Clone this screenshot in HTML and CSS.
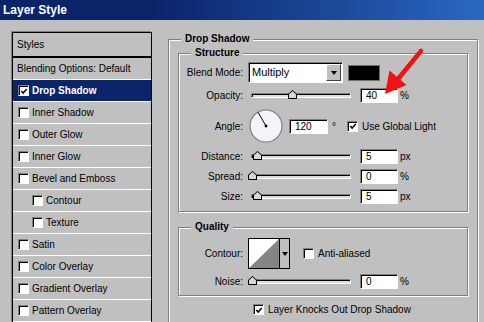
FILE: index.html
```html
<!DOCTYPE html>
<html lang="en">
<head>
    <meta charset="UTF-8">
    <meta name="viewport" content="width=device-width, initial-scale=1.0">
    <title>Layer Style</title>
    <link rel="stylesheet" href="styles.css">
</head>
<body>
    <div class="window">
        <div class="titlebar">Layer Style</div>
        <div class="main">
            <ul class="style-list">
                <li class="head">Styles</li>
                <li class="plain">Blending Options: Default</li>
                <li class="selected"><span class="check"><svg width="9" height="9" viewBox="0 0 9 9"><path d="M1.5 4 L3.5 6.3 L7.6 1.8" fill="none" stroke="#000" stroke-width="1.7"/></svg></span>Drop Shadow</li>
                <li><span class="check"></span>Inner Shadow</li>
                <li><span class="check"></span>Outer Glow</li>
                <li><span class="check"></span>Inner Glow</li>
                <li><span class="check"></span>Bevel and Emboss</li>
                <li class="sub"><span class="check"></span>Contour</li>
                <li class="sub"><span class="check"></span>Texture</li>
                <li><span class="check"></span>Satin</li>
                <li><span class="check"></span>Color Overlay</li>
                <li><span class="check"></span>Gradient Overlay</li>
                <li><span class="check"></span>Pattern Overlay</li>
            </ul>

            <div class="panel">
                <fieldset class="group outer">
                    <legend>Drop Shadow</legend>

                    <fieldset class="group inner">
                        <legend>Structure</legend>
                        <div class="row first">
                            <span class="lbl">Blend Mode:</span>
                            <div class="select">
                                <span class="select-value">Multiply</span>
                                <span class="select-btn"><span class="arrow"></span></span>
                            </div>
                            <span class="swatch"></span>
                        </div>
                        <div class="row">
                            <span class="lbl">Opacity:</span>
                            <div class="slider"><span class="thumb" style="left: 36px"></span></div>
                            <span class="num">40</span>
                            <span class="unit">%</span>
                        </div>
                        <div class="row">
                            <span class="lbl">Angle:</span>
                            <svg class="dial" width="36" height="36" viewBox="0 0 36 36">
                                <circle cx="18" cy="18" r="16.6" fill="#7a7a86"/>
                                <circle cx="18" cy="18" r="15.4" fill="#f4f4fa"/>
                                <path d="M18 18 L10 4.2" stroke="#000" stroke-width="1"/>
                                <circle cx="18" cy="18" r="1.4" fill="#000"/>
                            </svg>
                            <span class="num angle">120</span>
                            <span class="unit deg">°</span>
                            <span class="check"><svg width="9" height="9" viewBox="0 0 9 9"><path d="M1.5 4 L3.5 6.3 L7.6 1.8" fill="none" stroke="#000" stroke-width="1.7"/></svg></span>
                            <span class="check-label">Use Global Light</span>
                        </div>
                        <div class="row">
                            <span class="lbl">Distance:</span>
                            <div class="slider"><span class="thumb" style="left: 1px"></span></div>
                            <span class="num">5</span>
                            <span class="unit">px</span>
                        </div>
                        <div class="row">
                            <span class="lbl">Spread:</span>
                            <div class="slider"><span class="thumb" style="left: -4px"></span></div>
                            <span class="num">0</span>
                            <span class="unit">%</span>
                        </div>
                        <div class="row">
                            <span class="lbl">Size:</span>
                            <div class="slider"><span class="thumb" style="left: 1px"></span></div>
                            <span class="num">5</span>
                            <span class="unit">px</span>
                        </div>
                    </fieldset>

                    <fieldset class="group inner quality">
                        <legend>Quality</legend>
                        <div class="row first">
                            <span class="lbl">Contour:</span>
                            <div class="contour">
                                <svg width="30" height="29" viewBox="0 0 30 29">
                                    <rect width="30" height="29" fill="#fff"/>
                                    <polygon points="0,29 30,0 30,29" fill="#858585"/>
                                </svg>
                                <span class="contour-btn"><span class="arrow"></span></span>
                            </div>
                            <span class="check aa"></span>
                            <span class="check-label">Anti-aliased</span>
                        </div>
                        <div class="row">
                            <span class="lbl">Noise:</span>
                            <div class="slider"><span class="thumb" style="left: -4px"></span></div>
                            <span class="num">0</span>
                            <span class="unit">%</span>
                        </div>
                    </fieldset>

                    <div class="knockout">
                        <span class="check"><svg width="9" height="9" viewBox="0 0 9 9"><path d="M1.5 4 L3.5 6.3 L7.6 1.8" fill="none" stroke="#000" stroke-width="1.7"/></svg></span>
                        <span class="check-label">Layer Knocks Out Drop Shadow</span>
                    </div>
                </fieldset>
            </div>
        </div>

        <!-- red annotation arrow pointing at the opacity value -->
        <svg class="callout" width="484" height="322" viewBox="0 0 484 322">
            <line x1="421" y1="51" x2="398" y2="79" stroke="#ee1212" stroke-width="4.5" stroke-linecap="round"/>
            <polygon points="385,94 389.5,70.5 406.5,85" fill="#ee1212"/>
        </svg>
    </div>
</body>
</html>
```

FILE: styles.css
```css
body {
    margin: 0;
    font-family: "Liberation Sans", Arial, sans-serif;
    font-size: 10px;
    color: #000;
    background-color: #c0c0c0;
}
.window {
    position: relative;
    width: 484px;
    height: 322px;
    overflow: hidden;
    background-color: #c0c0c0;
}
.titlebar {
    height: 20px;
    line-height: 20px;
    padding-left: 3px;
    font-size: 12px;
    font-weight: bold;
    color: #fff;
    background: linear-gradient(to right, #0a246a 0%, #0a246a 32%, #2a68c2 100%);
}
.main {
    display: flex;
    align-items: flex-start;
    gap: 16px;
    padding: 12px 0 0 12px;
}

/* left list of effects */
.style-list {
    list-style: none;
    margin: 0;
    padding: 0;
    width: 140px;
    box-sizing: border-box;
    border: 1px solid #000;
    box-shadow: -1px -1px 0 #808080;
    flex: none;
}
.style-list li {
    display: flex;
    align-items: center;
    gap: 3px;
    height: 21px;
    padding-left: 5px;
    border-bottom: 1px solid #fff;
    white-space: nowrap;
}
.style-list li.head {
    height: 23px;
    padding-left: 4px;
    border-bottom: 2px solid #000;
}
.style-list li.plain {
    padding-left: 4px;
}
.style-list li.sub {
    padding-left: 19px;
}
.style-list li.selected {
    background-color: #0a246a;
    color: #fff;
    font-weight: bold;
}

/* checkbox */
.check {
    display: flex;
    align-items: center;
    justify-content: center;
    flex: none;
    width: 11px;
    height: 11px;
    box-sizing: border-box;
    background-color: #fff;
    border: 1px solid;
    border-color: #808080 #fff #fff #808080;
    box-shadow: inset 1px 1px 0 #000;
}
.check svg {
    margin: 1px 0 0 1px;
}
.check-label {
    margin-left: 4px;
    white-space: nowrap;
}

/* right side */
.panel {
    width: 310px;
    margin-top: 1px;
    flex: none;
}
.group {
    margin: 0;
    padding: 0 0 7px 0;
    min-width: 0;
    border: 1px solid #808080;
    box-shadow: inset 1px 1px 0 #fff, 1px 1px 0 #fff;
}
.group legend {
    margin-left: 12px;
    padding: 0 4px;
    line-height: 12px;
    font-weight: bold;
    background-color: #c0c0c0;
}
.outer {
    padding-bottom: 40px;
}
.inner {
    margin: 2px 9px 0 9px;
}
.quality {
    margin-top: 9px;
    padding-bottom: 6px;
}
.row {
    display: flex;
    align-items: center;
    margin-top: 5px;
}
.row.first {
    margin-top: 3px;
}
.quality .row.first {
    margin-top: 5px;
}
.lbl {
    width: 64px;
    margin-right: 5px;
    text-align: right;
    white-space: nowrap;
}

/* blend mode select */
.select {
    display: flex;
    width: 95px;
    height: 21px;
    box-sizing: border-box;
    background-color: #fff;
    border: 1px solid;
    border-color: #808080 #fff #fff #808080;
    box-shadow: inset 1px 1px 0 #000;
}
.select-value {
    flex: 1;
    padding-left: 3px;
    line-height: 19px;
    font-size: 11px;
}
.select-btn {
    display: flex;
    align-items: center;
    justify-content: center;
    width: 15px;
    margin: 1px 1px 1px 0;
    box-sizing: border-box;
    background-color: #c0c0c0;
    border: 1px solid;
    border-color: #fff #404040 #404040 #fff;
}
.arrow {
    width: 0;
    height: 0;
    border-left: 3px solid transparent;
    border-right: 3px solid transparent;
    border-top: 4px solid #000;
}
.swatch {
    width: 32px;
    height: 16px;
    margin-left: 5px;
    box-sizing: border-box;
    background-color: #000;
    border: 1px solid #707070;
}

/* sliders */
.slider {
    position: relative;
    width: 100px;
    height: 5px;
    margin: 0 9px 0 3px;
    box-sizing: border-box;
    background-color: #dcdcdc;
    border: 1px solid;
    border-color: #808080 #fff #fff #808080;
    box-shadow: inset 1px 1px 0 #000;
}
.thumb {
    position: absolute;
    bottom: -2px;
    width: 9px;
    height: 9px;
    background-color: #000;
    clip-path: polygon(50% 0, 100% 45%, 100% 100%, 0 100%, 0 45%);
}
.thumb::after {
    content: "";
    position: absolute;
    left: 1px;
    top: 1px;
    width: 7px;
    height: 7px;
    background-color: #d8d8d8;
    clip-path: polygon(50% 0, 100% 45%, 100% 100%, 0 100%, 0 45%);
}

/* numeric fields */
.num {
    width: 38px;
    height: 15px;
    box-sizing: border-box;
    padding-left: 5px;
    line-height: 14px;
    background-color: #fff;
    border: 1px solid;
    border-color: #808080 #fff #fff #808080;
    box-shadow: inset 1px 1px 0 #000;
}
.unit {
    margin-left: 2px;
}
.dial {
    flex: none;
    margin-right: 5px;
}
.num.angle {
    width: 39px;
}
.unit.deg {
    margin: 0 11px 0 4px;
}

/* contour picker */
.contour {
    display: flex;
    width: 42px;
    height: 31px;
    box-sizing: border-box;
    border: 1px solid #000;
}
.contour svg {
    display: block;
}
.contour-btn {
    display: flex;
    align-items: center;
    justify-content: center;
    flex: 1;
    border-left: 1px solid #000;
}
.check.aa {
    margin-left: 13px;
}
.knockout {
    display: flex;
    align-items: center;
    margin: 8px 0 0 84px;
}

/* annotation overlay */
.callout {
    position: absolute;
    left: 0;
    top: 0;
    pointer-events: none;
}
```
